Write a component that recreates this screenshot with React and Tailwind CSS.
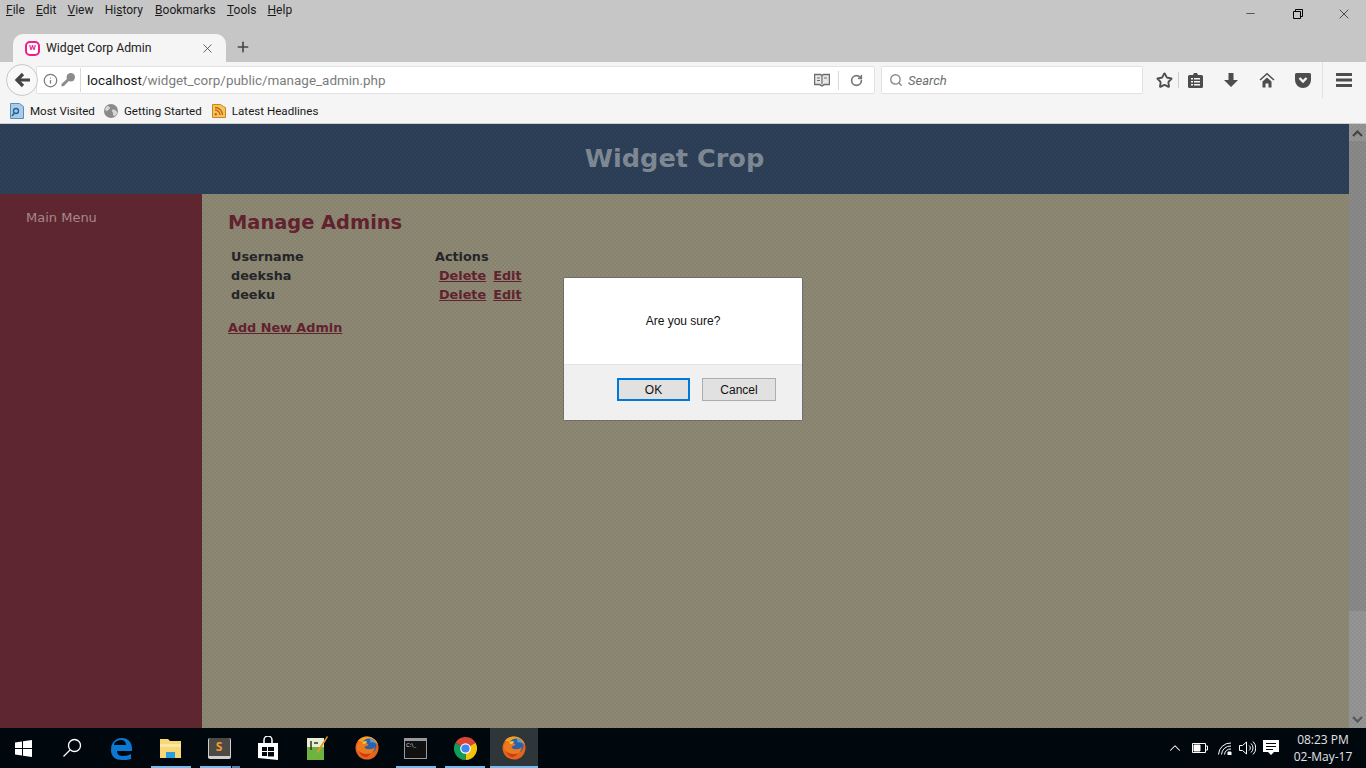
import { ChevronUp, Search, RotateCw, Info, Star, X, Plus, Minus } from 'lucide-react'

const UI_FONT = 'font-["Roboto","Noto_Sans",sans-serif]'

function FirefoxIcon({ size = 24 }) {
  return (
    <svg width={size} height={size} viewBox="0 0 24 24">
      <circle cx="12" cy="12" r="11.500" fill="#e5631c" />
      <path d="M3 5c2-3 5-4.500 9-4.500 5 0 9 3 11 8-2-2-5-3-8-2.500-4 1-8 0-12-1z" fill="#f6a01e" />
      <circle cx="14" cy="10" r="7.500" fill="#2b62ad" />
      <path d="M15 3c3 0 5.500 2 6.500 5-2-1.500-4-2-6-1.500z" fill="#5aa0dc" />
      <path d="M2 9c1-2 2-3 3-4 0 1 1 2 2 2 2 0 5 0 6 1s-1 2-3 2.500c-1 1 0 2 2 2.500 3 .5 6 0 8-2-1 5-4 8-8 8-5 0-9-3-10-7-.2-1-.2-2 0-3z" fill="#ec7a1c" />
      <path d="M4 15c3 3 8 4 12 2-2 3-4 4.500-6 4-3-.5-5-3-6-6z" fill="#d13a16" />
      <path d="M7 6.500c1-1 3-1.500 5-1 0 1-1 2-2 2.500-1 0-2.500-.5-3-1.500z" fill="#f9c13a" />
    </svg>
  )
}

function ChromeIcon() {
  return (
    <svg width="23" height="23" viewBox="0 0 24 24">
      <path d="M12 12 1.600 6A12 12 0 0 1 22.400 6z" fill="#db4437" />
      <path d="M12 12 22.400 6A12 12 0 0 1 12 24z" fill="#f4c20d" />
      <path d="M12 12 12 24A12 12 0 0 1 1.600 6z" fill="#0f9d58" />
      <circle cx="12" cy="12" r="5.500" fill="#fff" />
      <circle cx="12" cy="12" r="4.300" fill="#4285f4" />
    </svg>
  )
}

function Toolbar() {
  return (
    <div className="flex items-center h-[36px] pl-[6px] bg-[#f5f5f5] text-[#4d4d4d]">
      <div className="w-[32px] h-[32px] rounded-full border border-[#c8c8c8] bg-[#f8f8f8] flex items-center justify-center shrink-0 z-10">
        <svg width="16" height="16" viewBox="0 0 16 16" fill="none" stroke="#444444" strokeWidth="3.200">
          <path d="M16 8H3M9 2 3 8l6 6" />
        </svg>
      </div>
      <div className="flex items-center h-[28px] w-[839px] -ml-[2px] bg-white border border-[#e2e2e2] rounded-r-[2px]">
        <Info size={15} className="ml-[6px] text-[#7a7a7a]" />
        <svg className="ml-[3px]" width="14" height="14" viewBox="0 0 14 14" fill="#8c8c8c">
          <circle cx="9.800" cy="4.200" r="4.200" />
          <path d="M7 5 8.800 7 3 13l-2.500.500L.5 11z" />
        </svg>
        <div className="w-px h-[24px] bg-[#d8d8d8] ml-[5px]" />
        <span className="ml-[6px] pt-[1px] text-[13.450px] text-[#1c1c1c] leading-none">
          localhost<span className="text-[#7c7c7c]">/widget_corp/public/manage_admin.php</span>
        </span>
        <div className="ml-auto flex items-center">
          <svg width="16" height="14" viewBox="0 0 16 14" fill="none" stroke="#6e6e6e">
            <path d="M.5 1.500h6l1.500 1 1.500-1h6v10h-5L8 13l-2.500-1.500h-5z" fill="#e8e8e8" strokeWidth="1.500" />
            <path d="M8 3v8M3 5h3M3 7.500h3M10 5h3" strokeWidth="1.200" />
          </svg>
          <div className="w-px h-[19px] bg-[#d8d8d8] ml-[8px]" />
          <RotateCw size={13} strokeWidth={3} className="mx-[11px] text-[#777777]" />
        </div>
      </div>
      <div className="flex items-center h-[28px] w-[262px] ml-[6px] bg-white border border-[#e2e2e2] rounded-[1px]">
        <Search size={14} strokeWidth={2.4} className="ml-[7px] text-[#8a8a8a]" />
        <span className="ml-[5px] pt-[2px] text-[13px] italic text-[#6e6e6e]">Search</span>
      </div>
      <Star size={17} strokeWidth={2.6} className="ml-[13px]" />
      <div className="w-px h-[16px] bg-[#cfcfcf] ml-[5px]" />
      <svg className="ml-[9px]" width="15" height="16" viewBox="0 0 15 16" fill="#4d4d4d">
        <path d="M1.500 3H5l1-2h3l1 2h3.500A1.500 1.500 0 0 1 15 4.500v10a1.500 1.500 0 0 1-1.500 1.500h-12A1.500 1.500 0 0 1 0 14.500v-10A1.500 1.500 0 0 1 1.500 3z" />
        <path d="M3 6h2v1.500H3zM6 6h6v1.500H6zM3 9h2v1.500H3zM6 9h6v1.500H6zM3 12h2v1.500H3zM6 12h6v1.500H6z" fill="#f5f5f5" />
      </svg>
      <svg className="ml-[20px]" width="16" height="16" viewBox="0 0 16 16" fill="#4d4d4d">
        <path d="M5.500 1h5v7h4.500L8 15 1 8h4.500z" />
      </svg>
      <svg className="ml-[20px]" width="16" height="16" viewBox="0 0 16 16" fill="#4d4d4d">
        <path d="M1 8 8 1.800 15 8" fill="none" stroke="#4d4d4d" strokeWidth="1.500" />
        <path d="M3.500 9.500 8 5.500l4.500 4V15.500h-3V11.500h-3v4h-3z" />
      </svg>
      <svg className="ml-[20px]" width="16" height="16" viewBox="0 0 16 16">
        <path d="M1.500 1h13A1.500 1.500 0 0 1 16 2.500V8A8 8 0 0 1 0 8V2.500A1.500 1.500 0 0 1 1.500 1z" fill="#4d4d4d" />
        <path d="M4.500 6 8 9.500 11.500 6" fill="none" stroke="#f5f5f5" strokeWidth="2.400" />
      </svg>
      <div className="w-px h-[36px] bg-[#e0e0e0] ml-[11px] self-start" />
      <svg className="ml-[13px]" width="16" height="14" viewBox="0 0 16 14" fill="#4d4d4d">
        <path d="M.5 0h15a.5.5 0 0 1 .5.500V3H0V.5A.5.5 0 0 1 .5 0zM0 5.500h16v3H0zM0 11h16v2.500a.5.5 0 0 1-.5.500H.5a.5.5 0 0 1-.5-.5z" />
      </svg>
    </div>
  )
}

function BrowserChrome() {
  return (
    <div className={`shrink-0 bg-[#c6c6c6] text-black ${UI_FONT}`}>
      <div className="flex items-start h-[33px] pl-[6px] text-[12px] leading-[17px] text-[#1a1a1a]">
        <div className="flex gap-[11.200px] pt-[2px]">
          <span><u>F</u>ile</span>
          <span><u>E</u>dit</span>
          <span><u>V</u>iew</span>
          <span>Hi<u>s</u>tory</span>
          <span className="ml-[1px]"><u>B</u>ookmarks</span>
          <span><u>T</u>ools</span>
          <span><u>H</u>elp</span>
        </div>
        <div className="ml-auto flex items-center h-[27px]">
          <Minus size={13} strokeWidth={1.2} className="mr-[36px]" />
          <svg className="mr-[33px]" width="10" height="10" viewBox="0 0 10 10" fill="none" stroke="#000">
            <path d="M.5 2.500h7v7h-7zM2.500 2.500v-2h7v7h-2" />
          </svg>
          <X size={16} strokeWidth={1.1} className="mr-[14px]" />
        </div>
      </div>
      <div className="flex items-end h-[29px] pl-[13px]">
        <div className="flex items-center h-[28px] w-[213px] bg-[#f5f5f5] rounded-t-[10px] pl-[12px] text-[#222222]">
          <span className="w-[15px] h-[15px] rounded-[5px] bg-white border-2 border-[#ec1e8c] flex items-center justify-center text-[8px] font-bold text-[#ec1e8c] leading-none">W</span>
          <span className="ml-[6px] text-[12.250px]">Widget Corp Admin</span>
          <X size={15} strokeWidth={1.3} className="ml-auto mr-[11px] text-[#444444]" />
        </div>
        <Plus size={16} strokeWidth={2.4} className="ml-[9px] mb-[7px] text-[#444444]" />
      </div>
      <Toolbar />
      <div className="flex items-center h-[26px] bg-[#f5f5f5] border-b border-[#d0d0d0] pl-[10px] text-[11.600px] text-[#1a1a1a]">
        <svg width="14" height="16" viewBox="0 0 14 16">
          <path d="M.5.5h9l4 3v12H.5z" fill="#a8cdea" stroke="#5c8db8" />
          <circle cx="6" cy="8" r="2.500" fill="none" stroke="#2c5f90" strokeWidth="1.400" />
          <path d="M4 10.500 2 13" stroke="#2c5f90" strokeWidth="1.600" />
        </svg>
        <span className="ml-[6px] pt-[3px]">Most Visited</span>
        <svg className="ml-[9px]" width="14" height="14" viewBox="0 0 14 14">
          <circle cx="7" cy="7" r="7" fill="#8a8a8a" />
          <path d="M3 2c2 0 3 1 3 2S4 6 3 7 1 5 1 5zM8 6c2-1 4 0 5 2s-2 4-3 4-1-2-1-3-2-2-1-3z" fill="#d6d6d6" />
        </svg>
        <span className="ml-[6px] pt-[3px]">Getting Started</span>
        <svg className="ml-[10px]" width="14" height="15" viewBox="0 0 14 15">
          <path d="M.5 1.500h8l3 2 2 1v10H.5z" fill="#f4c55a" stroke="#c08a1e" />
          <path d="M3 7a5 5 0 0 1 5 5M3 4.500A7.500 7.500 0 0 1 10.500 12" fill="none" stroke="#c9650f" strokeWidth="1.300" />
          <circle cx="3.800" cy="11.200" r="1.200" fill="#c9650f" />
        </svg>
        <span className="ml-[6px] pt-[3px]">Latest Headlines</span>
      </div>
    </div>
  )
}

function PageContent() {
  return (
    <div className="flex-1 flex flex-col font-['DejaVu_Sans',Verdana,sans-serif]">
      <header className="h-[70px] shrink-0 bg-[#2d4058] flex items-center justify-center">
        <h1 className="text-[25.600px] font-bold text-[#808b95] leading-none pb-[1px]">Widget Crop</h1>
      </header>
      <div className="flex-1 flex">
        <aside className="w-[202px] shrink-0 bg-[#612731] pl-[26px] pt-[16px]">
          <div className="text-[13px] leading-[16px] text-[#a98c90]">Main Menu</div>
        </aside>
        <main className="flex-1 bg-[#8d8974] pl-[26px] pt-[16px] text-[12.800px] font-bold">
          <h2 className="text-[19.400px] leading-[26px] text-[#64232f]">Manage Admins</h2>
          <div className="mt-[11px] ml-[3px] grid grid-cols-[204px_1fr] leading-[19px] text-[#26262a]">
            <span>Username</span>
            <span>Actions</span>
            <span>deeksha</span>
            <span className="pl-[4px] flex gap-[7px] text-[#64232f] underline"><span>Delete</span><span>Edit</span></span>
            <span>deeku</span>
            <span className="pl-[4px] flex gap-[7px] text-[#64232f] underline"><span>Delete</span><span>Edit</span></span>
          </div>
          <div className="mt-[14px] text-[#64232f] underline leading-[19px]">Add New Admin</div>
        </main>
      </div>
    </div>
  )
}

function ConfirmDialog() {
  return (
    <div className="absolute left-[563px] top-[153px] w-[240px] h-[144px] bg-white border border-[#6f6f68] rounded-[2px] font-['Liberation_Sans',Arial,sans-serif] text-[12px] text-[#111111] flex flex-col">
      <div className="h-[86px] flex items-center justify-center">Are you sure?</div>
      <div className="flex-1 bg-[#f0f0f0] border-t border-[#e4e4e4] flex items-start pl-[53px] pt-[13px] gap-[12px]">
        <div className="w-[73px] h-[23px] bg-[#e1e1e1] border-2 border-[#0078d7] flex items-center justify-center">OK</div>
        <div className="w-[74px] h-[23px] bg-[#e1e1e1] border border-[#adadad] flex items-center justify-center">Cancel</div>
      </div>
    </div>
  )
}

function Taskbar() {
  const underline = 'absolute bottom-0 h-[2px] bg-[#76b9ed]'
  return (
    <div className="relative h-[40px] shrink-0 bg-[#00080e] flex items-center text-white font-['Open_Sans','Noto_Sans',sans-serif]">
      <div className="w-[47px] flex justify-center">
        <svg width="17" height="17" viewBox="0 0 17 17" fill="#fff">
          <path d="M0 2.500 7 1.500v6.500H0zM8 1.300 17 0v8H8zM0 9h7v6.500L0 14.500zM8 9h9v8L8 15.700z" />
        </svg>
      </div>
      <div className="w-[49px] flex justify-center">
        <svg width="20" height="20" viewBox="0 0 20 20" fill="none" stroke="#fff" strokeWidth="1.300">
          <circle cx="12.500" cy="7.500" r="6" />
          <path d="M8 12 1.500 18.500" />
        </svg>
      </div>
      <div className="w-[50px] flex justify-center">
        <svg width="22" height="23" viewBox="0 0 22 23">
          <path d="M1 11C2 4 7 1 12 1c6 0 10 4 10 11v2H7c0 4 3 5 6 5 3 0 6-1 8-2v5c-3 1-6 1-9 1-6 0-11-3-11-10 0-4 2-7 5-9-1 1-2 2-2 4h12c0-3-2-5-5-5-5 0-8 4-10 8z" fill="#0b78d4" />
        </svg>
      </div>
      <div className="w-[49px] flex justify-center">
        <svg width="21" height="20" viewBox="0 0 21 20">
          <path d="M0 1h8l2 2h11v17H0z" fill="#f8d775" />
          <path d="M0 6h21v3H0z" fill="#fbe7a6" />
          <path d="M6 20v-6h9v6z" fill="#2a9fe0" />
        </svg>
      </div>
      <div className="w-[48px] flex justify-center">
        <div className="w-[23px] h-[21px] rounded-[2px] bg-[#4d4a46] border-b-[3px] border-x border-[#cfcfcf] flex items-center justify-center text-[12px] font-bold text-[#f29a2e] leading-none">S</div>
      </div>
      <div className="w-[49px] flex justify-center">
        <svg width="20" height="24" viewBox="0 0 20 24" fill="#fff">
          <path d="M0 7h20v17L0 22z" />
          <path d="M6 7V4a4 4 0 0 1 8 0v3" fill="none" stroke="#fff" strokeWidth="1.500" />
          <path d="M4 11h5v4H4zM10 11h6v4h-6zM4 16h5v4H4zM10 16h6v4.500h-6z" fill="#00080e" />
        </svg>
      </div>
      <div className="w-[50px] flex justify-center">
        <svg width="22" height="24" viewBox="0 0 22 24">
          <path d="M1 2h17v22H1z" fill="#e6efd0" />
          <path d="M1 11h17v13H1z" fill="#6cb33f" />
          <path d="M5 5v9M8 7h4" stroke="#333" strokeWidth="1.500" />
          <path d="M21 0l1 1-9 15-2 1 0-2z" fill="#e09a2b" />
        </svg>
      </div>
      <div className="w-[49px] flex justify-center"><FirefoxIcon /></div>
      <div className="w-[49px] flex justify-center">
        <div className="w-[23px] h-[21px] bg-[#111] border border-[#9a9a9a] border-t-[3px] text-[6px] leading-[8px] pl-[1px] text-[#dddddd]">C:\_</div>
      </div>
      <div className="w-[50px] flex justify-center"><ChromeIcon /></div>
      <div className="w-[48px] h-full flex justify-center items-center bg-[#2f3639]"><FirefoxIcon /></div>

      <span className={`${underline} left-[151px] w-[40px]`} />
      <span className={`${underline} left-[200px] w-[31px]`} />
      <span className={`${underline} left-[232px] w-[8px] opacity-70`} />
      <span className={`${underline} left-[396px] w-[40px]`} />
      <span className={`${underline} left-[445px] w-[40px]`} />
      <span className={`${underline} left-[490px] w-[48px]`} />

      <div className="ml-auto flex items-center">
        <ChevronUp size={18} strokeWidth={1.4} />
        <svg className="ml-[8px]" width="16" height="10" viewBox="0 0 16 10" fill="none" stroke="#fff">
          <path d="M.5.5h13v9H.5z" />
          <path d="M14 3h1.500v4H14" />
          <path d="M2 2h6v6H2z" fill="#fff" />
        </svg>
        <svg className="ml-[10px]" width="14" height="13" viewBox="0 0 14 13" fill="none" stroke="#fff">
          <path d="M.5 12.500A12 12 0 0 1 13 1M3.500 12.500A9 9 0 0 1 13 4M6.500 12.500A6 6 0 0 1 13 7" />
          <path d="M10 10h3v3h-3z" fill="#fff" />
        </svg>
        <svg className="ml-[7px]" width="17" height="14" viewBox="0 0 17 14" fill="none" stroke="#fff">
          <path d="M.5 4.500h3L7.500 1v12l-4-3.500h-3zM10 4.500a3 3 0 0 1 0 5M12 2.500a6 6 0 0 1 0 9M14 .5a9 9 0 0 1 0 13" />
        </svg>
        <svg className="ml-[7px]" width="16" height="16" viewBox="0 0 16 16" fill="#fff">
          <path d="M0 0h16v12h-5l-3 3-3-3H0z" />
          <path d="M3 3h10v1H3zM3 6h10v1H3zM3 9h7v1H3z" fill="#00080e" />
        </svg>
        <div className="w-[70px] ml-[9px] mr-[8px] text-center text-[12px] leading-[17px] text-[#e4e4e4]">
          <div>08:23 PM</div>
          <div>02-May-17</div>
        </div>
      </div>
    </div>
  )
}

export default function App() {
  return (
    <div className="w-[1366px] h-[768px] overflow-hidden flex flex-col">
      <BrowserChrome />
      <div className="relative flex-1 flex min-h-0">
        <PageContent />
        <div className="w-[17px] shrink-0 flex flex-col items-center bg-[#969696]">
          <svg className="mt-[6px]" width="11" height="7" viewBox="0 0 11 7" fill="none" stroke="#454545" strokeWidth="2.200"><path d="M1 6l4.500-4.500L10 6" /></svg>
          <div className="mt-[4px] w-full h-[470px] bg-[#8a8a8a]" />
          <svg className="mt-auto mb-[5px]" width="11" height="7" viewBox="0 0 11 7" fill="none" stroke="#5a5a5a" strokeWidth="2.200"><path d="M1 1l4.500 4.500L10 1" /></svg>
        </div>
        {/* dither from the tab-modal overlay */}
        <div className="absolute inset-0 pointer-events-none opacity-[0.05] bg-[repeating-conic-gradient(#000_0_25%,transparent_0_50%)] bg-size-[4px_4px]" />
        <ConfirmDialog />
      </div>
      <Taskbar />
    </div>
  )
}
